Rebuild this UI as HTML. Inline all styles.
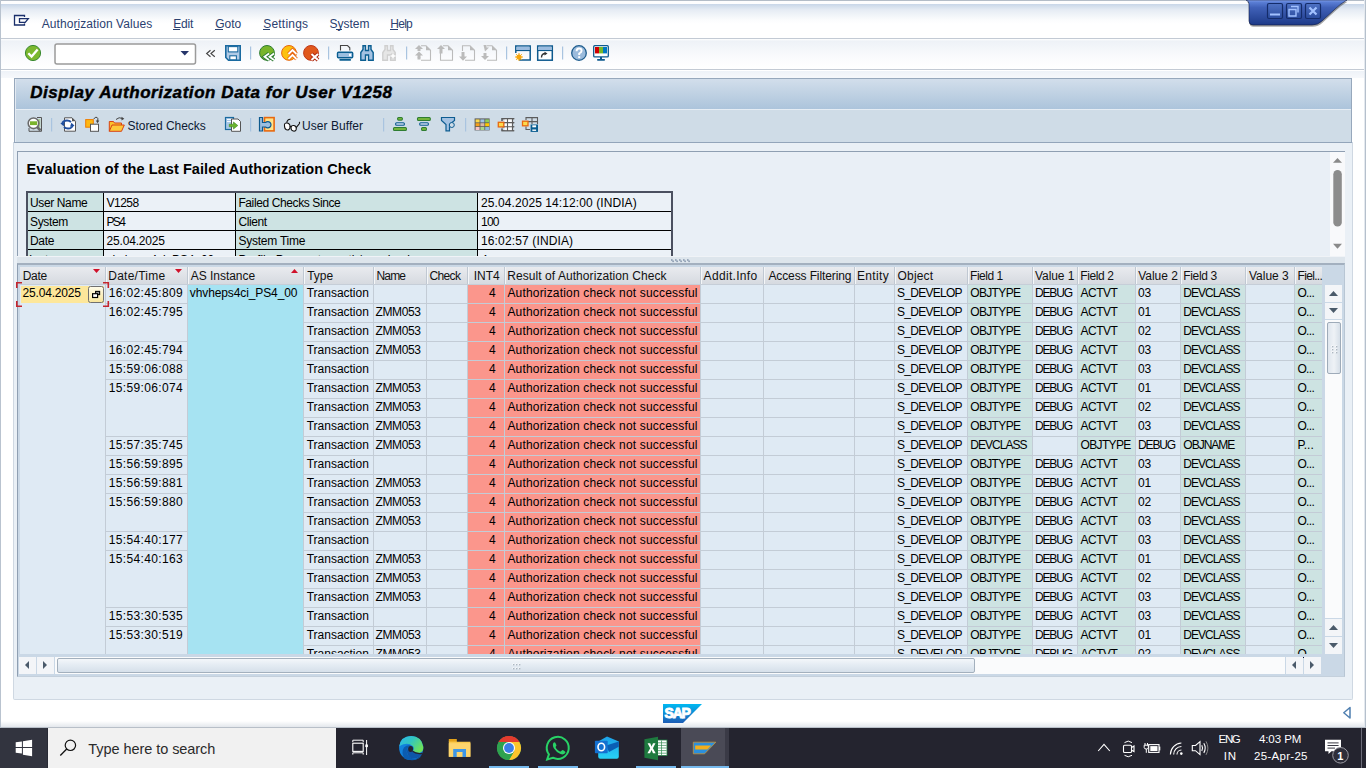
<!DOCTYPE html><html><head><meta charset="utf-8"><style>
*{margin:0;padding:0;box-sizing:border-box}
html,body{width:1366px;height:768px;overflow:hidden;background:#fff;font-family:"Liberation Sans", sans-serif;}
.a{position:absolute}
.t{position:absolute;white-space:pre;line-height:1;color:#000;font-size:12px}
svg{position:absolute;overflow:visible}
</style></head><body>
<div class="a" style="left:0px;top:0px;width:1366px;height:1px;background:#b3bcc7"></div>
<div class="a" style="left:0px;top:1px;width:1366px;height:3px;background:#fdfdfe"></div>
<div class="a" style="left:0px;top:4px;width:1366px;height:34px;background:linear-gradient(#c8d6e8 0px,#e6ecf4 6px,#fbfcfd 16px,#fff 20px)"></div>
<div class="a" style="left:0px;top:38px;width:1366px;height:1px;background:#c3cad4"></div>
<div class="a" style="left:0px;top:39px;width:1366px;height:30px;background:linear-gradient(#fff 0px,#eef2f7 2px,#fafbfd 18px,#fff 30px)"></div>
<div class="a" style="left:0px;top:69px;width:1366px;height:1px;background:#c3cad4"></div>
<div class="a" style="left:0px;top:70px;width:1366px;height:657px;background:#fff"></div>
<div class="a" style="left:1px;top:71px;width:1363px;height:7px;background:linear-gradient(#eef2f8,#f6f8fb)"></div>
<div class="a" style="left:0px;top:0px;width:1px;height:727px;background:#b9c3cf"></div>
<div class="a" style="left:1364px;top:0px;width:1px;height:727px;background:#e4e9ef"></div>
<div class="a" style="left:1365px;top:0px;width:1px;height:727px;background:#b5c0cc"></div>
<div class="a" style="left:1px;top:721px;width:1363px;height:6px;background:linear-gradient(rgba(255,255,255,0),#e3e7ec)"></div>
<div class="a" style="left:0px;top:727px;width:1366px;height:1px;background:#b8bfc8"></div>
<div class="t" style="left:41.70px;top:18px;font-size:12px;letter-spacing:0.075px;color:#2b4170;">Authorization Values</div>
<div class="t" style="left:173.30px;top:18px;font-size:12px;letter-spacing:-0.248px;color:#2b4170;">Edit</div>
<div class="t" style="left:215.20px;top:18px;font-size:12px;letter-spacing:-0.014px;color:#2b4170;">Goto</div>
<div class="t" style="left:263.20px;top:18px;font-size:12px;letter-spacing:0.220px;color:#2b4170;">Settings</div>
<div class="t" style="left:329.40px;top:18px;font-size:12px;color:#2b4170;">System</div>
<div class="t" style="left:390.30px;top:18px;font-size:12px;letter-spacing:-0.735px;color:#2b4170;">Help</div>
<div class="a" style="left:75.4px;top:29px;width:4.0px;height:1px;background:#2b4170"></div>
<div class="a" style="left:173.2px;top:29px;width:7.3px;height:1px;background:#2b4170"></div>
<div class="a" style="left:215.2px;top:29px;width:8.3px;height:1px;background:#2b4170"></div>
<div class="a" style="left:263.2px;top:29px;width:7.0px;height:1px;background:#2b4170"></div>
<div class="a" style="left:336.1px;top:29px;width:5.7px;height:1px;background:#2b4170"></div>
<div class="a" style="left:390.1px;top:29px;width:7.9px;height:1px;background:#2b4170"></div>
<div class="a" style="left:13px;top:142px;width:1340px;height:558px;background:#eaf0f6;border:1px solid #cfd8e2;border-top:none;border-radius:0 0 2px 2px"></div>
<div class="a" style="left:14px;top:78px;width:1338px;height:65px;background:#cfdce7;border:1px solid #97a8bc"></div>
<div class="a" style="left:15px;top:79px;width:1336px;height:30px;background:linear-gradient(#d2deeb,#acc4db);border-left:1px solid #e3eaf2"></div>
<div class="a" style="left:15px;top:109px;width:1336px;height:1px;background:#e6edf4"></div>
<div class="a" style="left:15px;top:110px;width:1336px;height:32px;background:#cfdce7;border-left:1px solid #e3eaf2"></div>
<div class="a" style="left:14px;top:142px;width:1338px;height:1px;background:#93a5ba"></div>
<div class="t" style="left:30.20px;top:84px;font-size:17px;font-weight:bold;font-style:italic;letter-spacing:0.559px;-webkit-text-stroke:0.45px #000;">Display Authorization Data for User V1258</div>
<div class="t" style="left:127.50px;top:120px;font-size:12px;letter-spacing:-0.034px;color:#0d1a33;">Stored Checks</div>
<div class="t" style="left:302.00px;top:120px;font-size:12px;letter-spacing:0.053px;color:#0d1a33;">User Buffer</div>
<div class="a" style="left:17px;top:151px;width:1328px;height:105px;background:#e9eff6;border-top:1px solid #8f9fb2;border-left:1px solid #8f9fb2"></div>
<div class="a" style="left:1330px;top:152px;width:15px;height:104px;background:#f8f9fb"></div>
<svg style="left:0;top:0" width="1366" height="768"><path d="M1333 162.8H1342L1337.5 158Z" fill="#8a8a8a"/><path d="M1333 243.8H1342L1337.5 248.8Z" fill="#8a8a8a"/><rect x="1333.3" y="170" width="8.5" height="56.5" rx="4.25" fill="#8c8c8c"/></svg>
<div class="t" style="left:26.60px;top:162px;font-size:14.5px;font-weight:bold;letter-spacing:0.072px;">Evaluation of the Last Failed Authorization Check</div>
<div class="a" style="left:26px;top:191px;width:647px;height:65px;background:#cde3e3;border:2px solid #4b5060;border-bottom:none"></div>
<div class="a" style="left:104px;top:193px;width:131px;height:63px;background:#ebf1f7"></div>
<div class="a" style="left:478px;top:193px;width:193px;height:63px;background:#ebf1f7"></div>
<div class="a" style="left:103px;top:193px;width:1px;height:63px;background:#000"></div>
<div class="a" style="left:235px;top:193px;width:1px;height:63px;background:#000"></div>
<div class="a" style="left:477px;top:193px;width:1px;height:63px;background:#000"></div>
<div class="a" style="left:28px;top:211px;width:643px;height:1px;background:#000"></div>
<div class="a" style="left:28px;top:230px;width:643px;height:1px;background:#000"></div>
<div class="a" style="left:28px;top:249px;width:643px;height:1px;background:#000"></div>
<div class="t" style="left:30.00px;top:197px;font-size:12px;letter-spacing:-0.376px;">User Name</div>
<div class="t" style="left:106.50px;top:197px;font-size:12px;letter-spacing:-0.506px;">V1258</div>
<div class="t" style="left:238.40px;top:197px;font-size:12px;letter-spacing:-0.389px;">Failed Checks Since</div>
<div class="t" style="left:481.00px;top:197px;font-size:12px;letter-spacing:0.087px;">25.04.2025 14:12:00 (INDIA)</div>
<div class="t" style="left:30.00px;top:216px;font-size:12px;letter-spacing:-0.362px;">System</div>
<div class="t" style="left:106.50px;top:216px;font-size:12px;letter-spacing:-1.654px;">PS4</div>
<div class="t" style="left:238.40px;top:216px;font-size:12px;letter-spacing:-0.389px;">Client</div>
<div class="t" style="left:481.00px;top:216px;font-size:12px;letter-spacing:-0.774px;">100</div>
<div class="t" style="left:30.00px;top:235px;font-size:12px;letter-spacing:-0.325px;">Date</div>
<div class="t" style="left:106.50px;top:235px;font-size:12px;letter-spacing:-0.176px;">25.04.2025</div>
<div class="t" style="left:238.40px;top:235px;font-size:12px;letter-spacing:-0.229px;">System Time</div>
<div class="t" style="left:481.00px;top:235px;font-size:12px;letter-spacing:0.137px;">16:02:57 (INDIA)</div>
<div class="t" style="left:29.00px;top:254px;font-size:12px;">Instance</div>
<div class="t" style="left:106.50px;top:254px;font-size:12px;letter-spacing:-0.109px;">vhvheps4ci_PS4_00</div>
<div class="t" style="left:238.40px;top:254px;font-size:12px;">Profile Parameter auth/no_check</div>
<div class="t" style="left:481.00px;top:254px;font-size:12px;">4</div>
<div class="a" style="left:17px;top:256px;width:1328px;height:7px;background:#dde5ec;border-top:1px solid #f0f3f7"></div>
<svg style="left:0;top:0" width="1366" height="768"><rect x="671" y="259.2" width="1.6" height="1.6" fill="#8a9bb0"/><rect x="672.3" y="260.5" width="1.6" height="1.6" fill="#8a9bb0"/><rect x="675" y="259.2" width="1.6" height="1.6" fill="#8a9bb0"/><rect x="676.3" y="260.5" width="1.6" height="1.6" fill="#8a9bb0"/><rect x="679" y="259.2" width="1.6" height="1.6" fill="#8a9bb0"/><rect x="680.3" y="260.5" width="1.6" height="1.6" fill="#8a9bb0"/><rect x="683" y="259.2" width="1.6" height="1.6" fill="#8a9bb0"/><rect x="684.3" y="260.5" width="1.6" height="1.6" fill="#8a9bb0"/><rect x="687" y="259.2" width="1.6" height="1.6" fill="#8a9bb0"/><rect x="688.3" y="260.5" width="1.6" height="1.6" fill="#8a9bb0"/></svg>
<div class="a" style="left:17px;top:263px;width:1328px;height:414px;background:#cad8e6;border-top:2px solid #a3b0bf;border-left:1px solid #8f9fb2;border-right:1px solid #b8c6d4;border-bottom:1px solid #c4d0dc"></div>
<div class="a" style="left:20px;top:267px;width:1302px;height:17px;background:linear-gradient(#e9ebef,#d6dae0)"></div>
<div class="a" style="left:20px;top:284px;width:1302px;height:1px;background:#c6ced8"></div>
<div class="a" style="left:105px;top:267px;width:1px;height:17px;background:#c0c8d2"></div>
<div class="a" style="left:106px;top:267px;width:1px;height:17px;background:#f4f6f8"></div>
<div class="a" style="left:187px;top:267px;width:1px;height:17px;background:#c0c8d2"></div>
<div class="a" style="left:188px;top:267px;width:1px;height:17px;background:#f4f6f8"></div>
<div class="a" style="left:303px;top:267px;width:1px;height:17px;background:#c0c8d2"></div>
<div class="a" style="left:304px;top:267px;width:1px;height:17px;background:#f4f6f8"></div>
<div class="a" style="left:373px;top:267px;width:1px;height:17px;background:#c0c8d2"></div>
<div class="a" style="left:374px;top:267px;width:1px;height:17px;background:#f4f6f8"></div>
<div class="a" style="left:426px;top:267px;width:1px;height:17px;background:#c0c8d2"></div>
<div class="a" style="left:427px;top:267px;width:1px;height:17px;background:#f4f6f8"></div>
<div class="a" style="left:467px;top:267px;width:1px;height:17px;background:#c0c8d2"></div>
<div class="a" style="left:468px;top:267px;width:1px;height:17px;background:#f4f6f8"></div>
<div class="a" style="left:504px;top:267px;width:1px;height:17px;background:#c0c8d2"></div>
<div class="a" style="left:505px;top:267px;width:1px;height:17px;background:#f4f6f8"></div>
<div class="a" style="left:700px;top:267px;width:1px;height:17px;background:#c0c8d2"></div>
<div class="a" style="left:701px;top:267px;width:1px;height:17px;background:#f4f6f8"></div>
<div class="a" style="left:763px;top:267px;width:1px;height:17px;background:#c0c8d2"></div>
<div class="a" style="left:764px;top:267px;width:1px;height:17px;background:#f4f6f8"></div>
<div class="a" style="left:854px;top:267px;width:1px;height:17px;background:#c0c8d2"></div>
<div class="a" style="left:855px;top:267px;width:1px;height:17px;background:#f4f6f8"></div>
<div class="a" style="left:894px;top:267px;width:1px;height:17px;background:#c0c8d2"></div>
<div class="a" style="left:895px;top:267px;width:1px;height:17px;background:#f4f6f8"></div>
<div class="a" style="left:967px;top:267px;width:1px;height:17px;background:#c0c8d2"></div>
<div class="a" style="left:968px;top:267px;width:1px;height:17px;background:#f4f6f8"></div>
<div class="a" style="left:1032px;top:267px;width:1px;height:17px;background:#c0c8d2"></div>
<div class="a" style="left:1033px;top:267px;width:1px;height:17px;background:#f4f6f8"></div>
<div class="a" style="left:1077px;top:267px;width:1px;height:17px;background:#c0c8d2"></div>
<div class="a" style="left:1078px;top:267px;width:1px;height:17px;background:#f4f6f8"></div>
<div class="a" style="left:1135px;top:267px;width:1px;height:17px;background:#c0c8d2"></div>
<div class="a" style="left:1136px;top:267px;width:1px;height:17px;background:#f4f6f8"></div>
<div class="a" style="left:1180px;top:267px;width:1px;height:17px;background:#c0c8d2"></div>
<div class="a" style="left:1181px;top:267px;width:1px;height:17px;background:#f4f6f8"></div>
<div class="a" style="left:1245px;top:267px;width:1px;height:17px;background:#c0c8d2"></div>
<div class="a" style="left:1246px;top:267px;width:1px;height:17px;background:#f4f6f8"></div>
<div class="a" style="left:1294px;top:267px;width:1px;height:17px;background:#c0c8d2"></div>
<div class="a" style="left:1295px;top:267px;width:1px;height:17px;background:#f4f6f8"></div>
<div class="t" style="left:22.70px;top:270px;font-size:12px;letter-spacing:-0.291px;color:#111;">Date</div>
<div class="t" style="left:108.30px;top:270px;font-size:12px;letter-spacing:0.234px;color:#111;">Date/Time</div>
<div class="t" style="left:190.70px;top:270px;font-size:12px;letter-spacing:-0.023px;color:#111;">AS Instance</div>
<div class="t" style="left:307.20px;top:270px;font-size:12px;letter-spacing:-0.014px;color:#111;">Type</div>
<div class="t" style="left:376.50px;top:270px;font-size:12px;letter-spacing:-0.845px;color:#111;">Name</div>
<div class="t" style="left:429.60px;top:270px;font-size:12px;letter-spacing:-0.678px;color:#111;">Check</div>
<div class="t" style="left:473.70px;top:270px;font-size:12px;letter-spacing:-0.010px;color:#111;">INT4</div>
<div class="t" style="left:507.20px;top:270px;font-size:12px;letter-spacing:0.069px;color:#111;">Result of Authorization Check</div>
<div class="t" style="left:703.60px;top:270px;font-size:12px;letter-spacing:0.319px;color:#111;">Addit.Info</div>
<div class="t" style="left:768.40px;top:270px;font-size:12px;letter-spacing:-0.108px;color:#111;">Access Filtering</div>
<div class="t" style="left:856.90px;top:270px;font-size:12px;letter-spacing:0.358px;color:#111;">Entity</div>
<div class="t" style="left:897.50px;top:270px;font-size:12px;letter-spacing:0.190px;color:#111;">Object</div>
<div class="t" style="left:970.10px;top:270px;font-size:12px;letter-spacing:-0.491px;color:#111;">Field 1</div>
<div class="t" style="left:1035.10px;top:270px;font-size:12px;letter-spacing:-0.089px;color:#111;">Value 1</div>
<div class="t" style="left:1080.20px;top:270px;font-size:12px;letter-spacing:-0.391px;color:#111;">Field 2</div>
<div class="t" style="left:1138.20px;top:270px;font-size:12px;letter-spacing:-0.022px;color:#111;">Value 2</div>
<div class="t" style="left:1183.30px;top:270px;font-size:12px;letter-spacing:-0.357px;color:#111;">Field 3</div>
<div class="t" style="left:1249.00px;top:270px;font-size:12px;letter-spacing:-0.022px;color:#111;">Value 3</div>
<div class="t" style="left:1297.50px;top:270px;font-size:12px;letter-spacing:-0.667px;color:#111;">Fiel...</div>
<svg style="left:93.0px;top:268.5px" width="7" height="4"><path d="M0 0 L7 0 L3.5 4Z" fill="#d0112b"/></svg>
<svg style="left:174.9px;top:268.5px" width="7" height="4"><path d="M0 0 L7 0 L3.5 4Z" fill="#d0112b"/></svg>
<svg style="left:290.7px;top:268.5px" width="7" height="4"><path d="M0 4 L3.5 0 L7 4Z" fill="#d0112b"/></svg>
<div class="a" style="left:20px;top:285px;width:85px;height:369px;background:#dfeaf4"></div>
<div class="a" style="left:105px;top:285px;width:1px;height:369px;background:#c3ccd6"></div>
<div class="a" style="left:106px;top:285px;width:81px;height:369px;background:#dfeaf4"></div>
<div class="a" style="left:187px;top:285px;width:1px;height:369px;background:#c3ccd6"></div>
<div class="a" style="left:188px;top:285px;width:115px;height:369px;background:#a6e3f2"></div>
<div class="a" style="left:303px;top:285px;width:1px;height:369px;background:#c3ccd6"></div>
<div class="a" style="left:304px;top:285px;width:69px;height:369px;background:#dfeaf4"></div>
<div class="a" style="left:373px;top:285px;width:1px;height:369px;background:#c3ccd6"></div>
<div class="a" style="left:374px;top:285px;width:52px;height:369px;background:#dfeaf4"></div>
<div class="a" style="left:426px;top:285px;width:1px;height:369px;background:#c3ccd6"></div>
<div class="a" style="left:427px;top:285px;width:40px;height:369px;background:#dfeaf4"></div>
<div class="a" style="left:467px;top:285px;width:1px;height:369px;background:#c3ccd6"></div>
<div class="a" style="left:468px;top:285px;width:36px;height:369px;background:#fb968c"></div>
<div class="a" style="left:504px;top:285px;width:1px;height:369px;background:#c3ccd6"></div>
<div class="a" style="left:505px;top:285px;width:195px;height:369px;background:#fb968c"></div>
<div class="a" style="left:700px;top:285px;width:1px;height:369px;background:#c3ccd6"></div>
<div class="a" style="left:701px;top:285px;width:62px;height:369px;background:#dfeaf4"></div>
<div class="a" style="left:763px;top:285px;width:1px;height:369px;background:#c3ccd6"></div>
<div class="a" style="left:764px;top:285px;width:90px;height:369px;background:#dfeaf4"></div>
<div class="a" style="left:854px;top:285px;width:1px;height:369px;background:#c3ccd6"></div>
<div class="a" style="left:855px;top:285px;width:39px;height:369px;background:#dfeaf4"></div>
<div class="a" style="left:894px;top:285px;width:1px;height:369px;background:#c3ccd6"></div>
<div class="a" style="left:895px;top:285px;width:72px;height:369px;background:#dfeaf4"></div>
<div class="a" style="left:967px;top:285px;width:1px;height:369px;background:#c3ccd6"></div>
<div class="a" style="left:968px;top:285px;width:64px;height:369px;background:#cde3e2"></div>
<div class="a" style="left:1032px;top:285px;width:1px;height:369px;background:#c3ccd6"></div>
<div class="a" style="left:1033px;top:285px;width:44px;height:369px;background:#dfeaf4"></div>
<div class="a" style="left:1077px;top:285px;width:1px;height:369px;background:#c3ccd6"></div>
<div class="a" style="left:1078px;top:285px;width:57px;height:369px;background:#cde3e2"></div>
<div class="a" style="left:1135px;top:285px;width:1px;height:369px;background:#c3ccd6"></div>
<div class="a" style="left:1136px;top:285px;width:44px;height:369px;background:#dfeaf4"></div>
<div class="a" style="left:1180px;top:285px;width:1px;height:369px;background:#c3ccd6"></div>
<div class="a" style="left:1181px;top:285px;width:64px;height:369px;background:#cde3e2"></div>
<div class="a" style="left:1245px;top:285px;width:1px;height:369px;background:#c3ccd6"></div>
<div class="a" style="left:1246px;top:285px;width:48px;height:369px;background:#dfeaf4"></div>
<div class="a" style="left:1294px;top:285px;width:1px;height:369px;background:#c3ccd6"></div>
<div class="a" style="left:1295px;top:285px;width:27px;height:369px;background:#cde3e2"></div>
<div class="a" style="left:304px;top:303px;width:1018px;height:1px;background:#c3ccd6"></div>
<div class="a" style="left:304px;top:322px;width:1018px;height:1px;background:#c3ccd6"></div>
<div class="a" style="left:304px;top:341px;width:1018px;height:1px;background:#c3ccd6"></div>
<div class="a" style="left:304px;top:360px;width:1018px;height:1px;background:#c3ccd6"></div>
<div class="a" style="left:304px;top:379px;width:1018px;height:1px;background:#c3ccd6"></div>
<div class="a" style="left:304px;top:398px;width:1018px;height:1px;background:#c3ccd6"></div>
<div class="a" style="left:304px;top:417px;width:1018px;height:1px;background:#c3ccd6"></div>
<div class="a" style="left:304px;top:436px;width:1018px;height:1px;background:#c3ccd6"></div>
<div class="a" style="left:304px;top:455px;width:1018px;height:1px;background:#c3ccd6"></div>
<div class="a" style="left:304px;top:474px;width:1018px;height:1px;background:#c3ccd6"></div>
<div class="a" style="left:304px;top:493px;width:1018px;height:1px;background:#c3ccd6"></div>
<div class="a" style="left:304px;top:512px;width:1018px;height:1px;background:#c3ccd6"></div>
<div class="a" style="left:304px;top:531px;width:1018px;height:1px;background:#c3ccd6"></div>
<div class="a" style="left:304px;top:550px;width:1018px;height:1px;background:#c3ccd6"></div>
<div class="a" style="left:304px;top:569px;width:1018px;height:1px;background:#c3ccd6"></div>
<div class="a" style="left:304px;top:588px;width:1018px;height:1px;background:#c3ccd6"></div>
<div class="a" style="left:304px;top:607px;width:1018px;height:1px;background:#c3ccd6"></div>
<div class="a" style="left:304px;top:626px;width:1018px;height:1px;background:#c3ccd6"></div>
<div class="a" style="left:304px;top:645px;width:1018px;height:1px;background:#c3ccd6"></div>
<div class="a" style="left:106px;top:303px;width:81px;height:1px;background:#c3ccd6"></div>
<div class="a" style="left:106px;top:341px;width:81px;height:1px;background:#c3ccd6"></div>
<div class="a" style="left:106px;top:360px;width:81px;height:1px;background:#c3ccd6"></div>
<div class="a" style="left:106px;top:379px;width:81px;height:1px;background:#c3ccd6"></div>
<div class="a" style="left:106px;top:436px;width:81px;height:1px;background:#c3ccd6"></div>
<div class="a" style="left:106px;top:455px;width:81px;height:1px;background:#c3ccd6"></div>
<div class="a" style="left:106px;top:474px;width:81px;height:1px;background:#c3ccd6"></div>
<div class="a" style="left:106px;top:493px;width:81px;height:1px;background:#c3ccd6"></div>
<div class="a" style="left:106px;top:531px;width:81px;height:1px;background:#c3ccd6"></div>
<div class="a" style="left:106px;top:550px;width:81px;height:1px;background:#c3ccd6"></div>
<div class="a" style="left:106px;top:607px;width:81px;height:1px;background:#c3ccd6"></div>
<div class="a" style="left:106px;top:626px;width:81px;height:1px;background:#c3ccd6"></div>
<div class="t" style="left:108.80px;top:287px;font-size:12px;letter-spacing:0.355px;">16:02:45:809</div>
<div class="t" style="left:189.80px;top:287px;font-size:12px;letter-spacing:-0.109px;">vhvheps4ci_PS4_00</div>
<div class="t" style="left:306.70px;top:287px;font-size:12px;letter-spacing:-0.008px;">Transaction</div>
<div class="t" style="left:507.40px;top:287px;font-size:12px;letter-spacing:0.181px;">Authorization check not successful</div>
<div class="t" style="left:897.00px;top:287px;font-size:12px;letter-spacing:-0.733px;">S_DEVELOP</div>
<div class="t" style="left:970.20px;top:287px;font-size:12px;letter-spacing:-0.646px;">OBJTYPE</div>
<div class="t" style="left:1035.00px;top:287px;font-size:12px;letter-spacing:-1.160px;">DEBUG</div>
<div class="t" style="left:1080.50px;top:287px;font-size:12px;letter-spacing:-0.501px;">ACTVT</div>
<div class="t" style="left:1138.10px;top:287px;font-size:12px;letter-spacing:-0.274px;">03</div>
<div class="t" style="left:1183.30px;top:287px;font-size:12px;letter-spacing:-0.960px;">DEVCLASS</div>
<div class="t" style="left:1297.40px;top:287px;font-size:12px;letter-spacing:-0.667px;">O...</div>
<div class="t" style="left:488.90px;top:287px;font-size:12px;">4</div>
<div class="t" style="left:108.80px;top:306px;font-size:12px;letter-spacing:0.355px;">16:02:45:795</div>
<div class="t" style="left:306.70px;top:306px;font-size:12px;letter-spacing:-0.008px;">Transaction</div>
<div class="t" style="left:375.60px;top:306px;font-size:12px;letter-spacing:-0.414px;">ZMM053</div>
<div class="t" style="left:507.40px;top:306px;font-size:12px;letter-spacing:0.181px;">Authorization check not successful</div>
<div class="t" style="left:897.00px;top:306px;font-size:12px;letter-spacing:-0.733px;">S_DEVELOP</div>
<div class="t" style="left:970.20px;top:306px;font-size:12px;letter-spacing:-0.646px;">OBJTYPE</div>
<div class="t" style="left:1035.00px;top:306px;font-size:12px;letter-spacing:-1.160px;">DEBUG</div>
<div class="t" style="left:1080.50px;top:306px;font-size:12px;letter-spacing:-0.501px;">ACTVT</div>
<div class="t" style="left:1138.10px;top:306px;font-size:12px;letter-spacing:-0.274px;">01</div>
<div class="t" style="left:1183.30px;top:306px;font-size:12px;letter-spacing:-0.960px;">DEVCLASS</div>
<div class="t" style="left:1297.40px;top:306px;font-size:12px;letter-spacing:-0.667px;">O...</div>
<div class="t" style="left:488.90px;top:306px;font-size:12px;">4</div>
<div class="t" style="left:306.70px;top:325px;font-size:12px;letter-spacing:-0.008px;">Transaction</div>
<div class="t" style="left:375.60px;top:325px;font-size:12px;letter-spacing:-0.414px;">ZMM053</div>
<div class="t" style="left:507.40px;top:325px;font-size:12px;letter-spacing:0.181px;">Authorization check not successful</div>
<div class="t" style="left:897.00px;top:325px;font-size:12px;letter-spacing:-0.733px;">S_DEVELOP</div>
<div class="t" style="left:970.20px;top:325px;font-size:12px;letter-spacing:-0.646px;">OBJTYPE</div>
<div class="t" style="left:1035.00px;top:325px;font-size:12px;letter-spacing:-1.160px;">DEBUG</div>
<div class="t" style="left:1080.50px;top:325px;font-size:12px;letter-spacing:-0.501px;">ACTVT</div>
<div class="t" style="left:1138.10px;top:325px;font-size:12px;letter-spacing:-0.274px;">02</div>
<div class="t" style="left:1183.30px;top:325px;font-size:12px;letter-spacing:-0.960px;">DEVCLASS</div>
<div class="t" style="left:1297.40px;top:325px;font-size:12px;letter-spacing:-0.667px;">O...</div>
<div class="t" style="left:488.90px;top:325px;font-size:12px;">4</div>
<div class="t" style="left:108.80px;top:344px;font-size:12px;letter-spacing:0.355px;">16:02:45:794</div>
<div class="t" style="left:306.70px;top:344px;font-size:12px;letter-spacing:-0.008px;">Transaction</div>
<div class="t" style="left:375.60px;top:344px;font-size:12px;letter-spacing:-0.414px;">ZMM053</div>
<div class="t" style="left:507.40px;top:344px;font-size:12px;letter-spacing:0.181px;">Authorization check not successful</div>
<div class="t" style="left:897.00px;top:344px;font-size:12px;letter-spacing:-0.733px;">S_DEVELOP</div>
<div class="t" style="left:970.20px;top:344px;font-size:12px;letter-spacing:-0.646px;">OBJTYPE</div>
<div class="t" style="left:1035.00px;top:344px;font-size:12px;letter-spacing:-1.160px;">DEBUG</div>
<div class="t" style="left:1080.50px;top:344px;font-size:12px;letter-spacing:-0.501px;">ACTVT</div>
<div class="t" style="left:1138.10px;top:344px;font-size:12px;letter-spacing:-0.274px;">03</div>
<div class="t" style="left:1183.30px;top:344px;font-size:12px;letter-spacing:-0.960px;">DEVCLASS</div>
<div class="t" style="left:1297.40px;top:344px;font-size:12px;letter-spacing:-0.667px;">O...</div>
<div class="t" style="left:488.90px;top:344px;font-size:12px;">4</div>
<div class="t" style="left:108.80px;top:363px;font-size:12px;letter-spacing:0.355px;">15:59:06:088</div>
<div class="t" style="left:306.70px;top:363px;font-size:12px;letter-spacing:-0.008px;">Transaction</div>
<div class="t" style="left:507.40px;top:363px;font-size:12px;letter-spacing:0.181px;">Authorization check not successful</div>
<div class="t" style="left:897.00px;top:363px;font-size:12px;letter-spacing:-0.733px;">S_DEVELOP</div>
<div class="t" style="left:970.20px;top:363px;font-size:12px;letter-spacing:-0.646px;">OBJTYPE</div>
<div class="t" style="left:1035.00px;top:363px;font-size:12px;letter-spacing:-1.160px;">DEBUG</div>
<div class="t" style="left:1080.50px;top:363px;font-size:12px;letter-spacing:-0.501px;">ACTVT</div>
<div class="t" style="left:1138.10px;top:363px;font-size:12px;letter-spacing:-0.274px;">03</div>
<div class="t" style="left:1183.30px;top:363px;font-size:12px;letter-spacing:-0.960px;">DEVCLASS</div>
<div class="t" style="left:1297.40px;top:363px;font-size:12px;letter-spacing:-0.667px;">O...</div>
<div class="t" style="left:488.90px;top:363px;font-size:12px;">4</div>
<div class="t" style="left:108.80px;top:382px;font-size:12px;letter-spacing:0.355px;">15:59:06:074</div>
<div class="t" style="left:306.70px;top:382px;font-size:12px;letter-spacing:-0.008px;">Transaction</div>
<div class="t" style="left:375.60px;top:382px;font-size:12px;letter-spacing:-0.414px;">ZMM053</div>
<div class="t" style="left:507.40px;top:382px;font-size:12px;letter-spacing:0.181px;">Authorization check not successful</div>
<div class="t" style="left:897.00px;top:382px;font-size:12px;letter-spacing:-0.733px;">S_DEVELOP</div>
<div class="t" style="left:970.20px;top:382px;font-size:12px;letter-spacing:-0.646px;">OBJTYPE</div>
<div class="t" style="left:1035.00px;top:382px;font-size:12px;letter-spacing:-1.160px;">DEBUG</div>
<div class="t" style="left:1080.50px;top:382px;font-size:12px;letter-spacing:-0.501px;">ACTVT</div>
<div class="t" style="left:1138.10px;top:382px;font-size:12px;letter-spacing:-0.274px;">01</div>
<div class="t" style="left:1183.30px;top:382px;font-size:12px;letter-spacing:-0.960px;">DEVCLASS</div>
<div class="t" style="left:1297.40px;top:382px;font-size:12px;letter-spacing:-0.667px;">O...</div>
<div class="t" style="left:488.90px;top:382px;font-size:12px;">4</div>
<div class="t" style="left:306.70px;top:401px;font-size:12px;letter-spacing:-0.008px;">Transaction</div>
<div class="t" style="left:375.60px;top:401px;font-size:12px;letter-spacing:-0.414px;">ZMM053</div>
<div class="t" style="left:507.40px;top:401px;font-size:12px;letter-spacing:0.181px;">Authorization check not successful</div>
<div class="t" style="left:897.00px;top:401px;font-size:12px;letter-spacing:-0.733px;">S_DEVELOP</div>
<div class="t" style="left:970.20px;top:401px;font-size:12px;letter-spacing:-0.646px;">OBJTYPE</div>
<div class="t" style="left:1035.00px;top:401px;font-size:12px;letter-spacing:-1.160px;">DEBUG</div>
<div class="t" style="left:1080.50px;top:401px;font-size:12px;letter-spacing:-0.501px;">ACTVT</div>
<div class="t" style="left:1138.10px;top:401px;font-size:12px;letter-spacing:-0.274px;">02</div>
<div class="t" style="left:1183.30px;top:401px;font-size:12px;letter-spacing:-0.960px;">DEVCLASS</div>
<div class="t" style="left:1297.40px;top:401px;font-size:12px;letter-spacing:-0.667px;">O...</div>
<div class="t" style="left:488.90px;top:401px;font-size:12px;">4</div>
<div class="t" style="left:306.70px;top:420px;font-size:12px;letter-spacing:-0.008px;">Transaction</div>
<div class="t" style="left:375.60px;top:420px;font-size:12px;letter-spacing:-0.414px;">ZMM053</div>
<div class="t" style="left:507.40px;top:420px;font-size:12px;letter-spacing:0.181px;">Authorization check not successful</div>
<div class="t" style="left:897.00px;top:420px;font-size:12px;letter-spacing:-0.733px;">S_DEVELOP</div>
<div class="t" style="left:970.20px;top:420px;font-size:12px;letter-spacing:-0.646px;">OBJTYPE</div>
<div class="t" style="left:1035.00px;top:420px;font-size:12px;letter-spacing:-1.160px;">DEBUG</div>
<div class="t" style="left:1080.50px;top:420px;font-size:12px;letter-spacing:-0.501px;">ACTVT</div>
<div class="t" style="left:1138.10px;top:420px;font-size:12px;letter-spacing:-0.274px;">03</div>
<div class="t" style="left:1183.30px;top:420px;font-size:12px;letter-spacing:-0.960px;">DEVCLASS</div>
<div class="t" style="left:1297.40px;top:420px;font-size:12px;letter-spacing:-0.667px;">O...</div>
<div class="t" style="left:488.90px;top:420px;font-size:12px;">4</div>
<div class="t" style="left:108.80px;top:439px;font-size:12px;letter-spacing:0.355px;">15:57:35:745</div>
<div class="t" style="left:306.70px;top:439px;font-size:12px;letter-spacing:-0.008px;">Transaction</div>
<div class="t" style="left:375.60px;top:439px;font-size:12px;letter-spacing:-0.414px;">ZMM053</div>
<div class="t" style="left:507.40px;top:439px;font-size:12px;letter-spacing:0.181px;">Authorization check not successful</div>
<div class="t" style="left:897.00px;top:439px;font-size:12px;letter-spacing:-0.733px;">S_DEVELOP</div>
<div class="t" style="left:970.20px;top:439px;font-size:12px;letter-spacing:-0.960px;">DEVCLASS</div>
<div class="t" style="left:1080.50px;top:439px;font-size:12px;letter-spacing:-0.646px;">OBJTYPE</div>
<div class="t" style="left:1138.10px;top:439px;font-size:12px;letter-spacing:-1.160px;">DEBUG</div>
<div class="t" style="left:1183.30px;top:439px;font-size:12px;letter-spacing:-1.001px;">OBJNAME</div>
<div class="t" style="left:1297.40px;top:439px;font-size:12px;letter-spacing:-0.042px;">P...</div>
<div class="t" style="left:488.90px;top:439px;font-size:12px;">4</div>
<div class="t" style="left:108.80px;top:458px;font-size:12px;letter-spacing:0.355px;">15:56:59:895</div>
<div class="t" style="left:306.70px;top:458px;font-size:12px;letter-spacing:-0.008px;">Transaction</div>
<div class="t" style="left:507.40px;top:458px;font-size:12px;letter-spacing:0.181px;">Authorization check not successful</div>
<div class="t" style="left:897.00px;top:458px;font-size:12px;letter-spacing:-0.733px;">S_DEVELOP</div>
<div class="t" style="left:970.20px;top:458px;font-size:12px;letter-spacing:-0.646px;">OBJTYPE</div>
<div class="t" style="left:1035.00px;top:458px;font-size:12px;letter-spacing:-1.160px;">DEBUG</div>
<div class="t" style="left:1080.50px;top:458px;font-size:12px;letter-spacing:-0.501px;">ACTVT</div>
<div class="t" style="left:1138.10px;top:458px;font-size:12px;letter-spacing:-0.274px;">03</div>
<div class="t" style="left:1183.30px;top:458px;font-size:12px;letter-spacing:-0.960px;">DEVCLASS</div>
<div class="t" style="left:1297.40px;top:458px;font-size:12px;letter-spacing:-0.667px;">O...</div>
<div class="t" style="left:488.90px;top:458px;font-size:12px;">4</div>
<div class="t" style="left:108.80px;top:477px;font-size:12px;letter-spacing:0.355px;">15:56:59:881</div>
<div class="t" style="left:306.70px;top:477px;font-size:12px;letter-spacing:-0.008px;">Transaction</div>
<div class="t" style="left:375.60px;top:477px;font-size:12px;letter-spacing:-0.414px;">ZMM053</div>
<div class="t" style="left:507.40px;top:477px;font-size:12px;letter-spacing:0.181px;">Authorization check not successful</div>
<div class="t" style="left:897.00px;top:477px;font-size:12px;letter-spacing:-0.733px;">S_DEVELOP</div>
<div class="t" style="left:970.20px;top:477px;font-size:12px;letter-spacing:-0.646px;">OBJTYPE</div>
<div class="t" style="left:1035.00px;top:477px;font-size:12px;letter-spacing:-1.160px;">DEBUG</div>
<div class="t" style="left:1080.50px;top:477px;font-size:12px;letter-spacing:-0.501px;">ACTVT</div>
<div class="t" style="left:1138.10px;top:477px;font-size:12px;letter-spacing:-0.274px;">01</div>
<div class="t" style="left:1183.30px;top:477px;font-size:12px;letter-spacing:-0.960px;">DEVCLASS</div>
<div class="t" style="left:1297.40px;top:477px;font-size:12px;letter-spacing:-0.667px;">O...</div>
<div class="t" style="left:488.90px;top:477px;font-size:12px;">4</div>
<div class="t" style="left:108.80px;top:496px;font-size:12px;letter-spacing:0.355px;">15:56:59:880</div>
<div class="t" style="left:306.70px;top:496px;font-size:12px;letter-spacing:-0.008px;">Transaction</div>
<div class="t" style="left:375.60px;top:496px;font-size:12px;letter-spacing:-0.414px;">ZMM053</div>
<div class="t" style="left:507.40px;top:496px;font-size:12px;letter-spacing:0.181px;">Authorization check not successful</div>
<div class="t" style="left:897.00px;top:496px;font-size:12px;letter-spacing:-0.733px;">S_DEVELOP</div>
<div class="t" style="left:970.20px;top:496px;font-size:12px;letter-spacing:-0.646px;">OBJTYPE</div>
<div class="t" style="left:1035.00px;top:496px;font-size:12px;letter-spacing:-1.160px;">DEBUG</div>
<div class="t" style="left:1080.50px;top:496px;font-size:12px;letter-spacing:-0.501px;">ACTVT</div>
<div class="t" style="left:1138.10px;top:496px;font-size:12px;letter-spacing:-0.274px;">02</div>
<div class="t" style="left:1183.30px;top:496px;font-size:12px;letter-spacing:-0.960px;">DEVCLASS</div>
<div class="t" style="left:1297.40px;top:496px;font-size:12px;letter-spacing:-0.667px;">O...</div>
<div class="t" style="left:488.90px;top:496px;font-size:12px;">4</div>
<div class="t" style="left:306.70px;top:515px;font-size:12px;letter-spacing:-0.008px;">Transaction</div>
<div class="t" style="left:375.60px;top:515px;font-size:12px;letter-spacing:-0.414px;">ZMM053</div>
<div class="t" style="left:507.40px;top:515px;font-size:12px;letter-spacing:0.181px;">Authorization check not successful</div>
<div class="t" style="left:897.00px;top:515px;font-size:12px;letter-spacing:-0.733px;">S_DEVELOP</div>
<div class="t" style="left:970.20px;top:515px;font-size:12px;letter-spacing:-0.646px;">OBJTYPE</div>
<div class="t" style="left:1035.00px;top:515px;font-size:12px;letter-spacing:-1.160px;">DEBUG</div>
<div class="t" style="left:1080.50px;top:515px;font-size:12px;letter-spacing:-0.501px;">ACTVT</div>
<div class="t" style="left:1138.10px;top:515px;font-size:12px;letter-spacing:-0.274px;">03</div>
<div class="t" style="left:1183.30px;top:515px;font-size:12px;letter-spacing:-0.960px;">DEVCLASS</div>
<div class="t" style="left:1297.40px;top:515px;font-size:12px;letter-spacing:-0.667px;">O...</div>
<div class="t" style="left:488.90px;top:515px;font-size:12px;">4</div>
<div class="t" style="left:108.80px;top:534px;font-size:12px;letter-spacing:0.355px;">15:54:40:177</div>
<div class="t" style="left:306.70px;top:534px;font-size:12px;letter-spacing:-0.008px;">Transaction</div>
<div class="t" style="left:507.40px;top:534px;font-size:12px;letter-spacing:0.181px;">Authorization check not successful</div>
<div class="t" style="left:897.00px;top:534px;font-size:12px;letter-spacing:-0.733px;">S_DEVELOP</div>
<div class="t" style="left:970.20px;top:534px;font-size:12px;letter-spacing:-0.646px;">OBJTYPE</div>
<div class="t" style="left:1035.00px;top:534px;font-size:12px;letter-spacing:-1.160px;">DEBUG</div>
<div class="t" style="left:1080.50px;top:534px;font-size:12px;letter-spacing:-0.501px;">ACTVT</div>
<div class="t" style="left:1138.10px;top:534px;font-size:12px;letter-spacing:-0.274px;">03</div>
<div class="t" style="left:1183.30px;top:534px;font-size:12px;letter-spacing:-0.960px;">DEVCLASS</div>
<div class="t" style="left:1297.40px;top:534px;font-size:12px;letter-spacing:-0.667px;">O...</div>
<div class="t" style="left:488.90px;top:534px;font-size:12px;">4</div>
<div class="t" style="left:108.80px;top:553px;font-size:12px;letter-spacing:0.355px;">15:54:40:163</div>
<div class="t" style="left:306.70px;top:553px;font-size:12px;letter-spacing:-0.008px;">Transaction</div>
<div class="t" style="left:375.60px;top:553px;font-size:12px;letter-spacing:-0.414px;">ZMM053</div>
<div class="t" style="left:507.40px;top:553px;font-size:12px;letter-spacing:0.181px;">Authorization check not successful</div>
<div class="t" style="left:897.00px;top:553px;font-size:12px;letter-spacing:-0.733px;">S_DEVELOP</div>
<div class="t" style="left:970.20px;top:553px;font-size:12px;letter-spacing:-0.646px;">OBJTYPE</div>
<div class="t" style="left:1035.00px;top:553px;font-size:12px;letter-spacing:-1.160px;">DEBUG</div>
<div class="t" style="left:1080.50px;top:553px;font-size:12px;letter-spacing:-0.501px;">ACTVT</div>
<div class="t" style="left:1138.10px;top:553px;font-size:12px;letter-spacing:-0.274px;">01</div>
<div class="t" style="left:1183.30px;top:553px;font-size:12px;letter-spacing:-0.960px;">DEVCLASS</div>
<div class="t" style="left:1297.40px;top:553px;font-size:12px;letter-spacing:-0.667px;">O...</div>
<div class="t" style="left:488.90px;top:553px;font-size:12px;">4</div>
<div class="t" style="left:306.70px;top:572px;font-size:12px;letter-spacing:-0.008px;">Transaction</div>
<div class="t" style="left:375.60px;top:572px;font-size:12px;letter-spacing:-0.414px;">ZMM053</div>
<div class="t" style="left:507.40px;top:572px;font-size:12px;letter-spacing:0.181px;">Authorization check not successful</div>
<div class="t" style="left:897.00px;top:572px;font-size:12px;letter-spacing:-0.733px;">S_DEVELOP</div>
<div class="t" style="left:970.20px;top:572px;font-size:12px;letter-spacing:-0.646px;">OBJTYPE</div>
<div class="t" style="left:1035.00px;top:572px;font-size:12px;letter-spacing:-1.160px;">DEBUG</div>
<div class="t" style="left:1080.50px;top:572px;font-size:12px;letter-spacing:-0.501px;">ACTVT</div>
<div class="t" style="left:1138.10px;top:572px;font-size:12px;letter-spacing:-0.274px;">02</div>
<div class="t" style="left:1183.30px;top:572px;font-size:12px;letter-spacing:-0.960px;">DEVCLASS</div>
<div class="t" style="left:1297.40px;top:572px;font-size:12px;letter-spacing:-0.667px;">O...</div>
<div class="t" style="left:488.90px;top:572px;font-size:12px;">4</div>
<div class="t" style="left:306.70px;top:591px;font-size:12px;letter-spacing:-0.008px;">Transaction</div>
<div class="t" style="left:375.60px;top:591px;font-size:12px;letter-spacing:-0.414px;">ZMM053</div>
<div class="t" style="left:507.40px;top:591px;font-size:12px;letter-spacing:0.181px;">Authorization check not successful</div>
<div class="t" style="left:897.00px;top:591px;font-size:12px;letter-spacing:-0.733px;">S_DEVELOP</div>
<div class="t" style="left:970.20px;top:591px;font-size:12px;letter-spacing:-0.646px;">OBJTYPE</div>
<div class="t" style="left:1035.00px;top:591px;font-size:12px;letter-spacing:-1.160px;">DEBUG</div>
<div class="t" style="left:1080.50px;top:591px;font-size:12px;letter-spacing:-0.501px;">ACTVT</div>
<div class="t" style="left:1138.10px;top:591px;font-size:12px;letter-spacing:-0.274px;">03</div>
<div class="t" style="left:1183.30px;top:591px;font-size:12px;letter-spacing:-0.960px;">DEVCLASS</div>
<div class="t" style="left:1297.40px;top:591px;font-size:12px;letter-spacing:-0.667px;">O...</div>
<div class="t" style="left:488.90px;top:591px;font-size:12px;">4</div>
<div class="t" style="left:108.80px;top:610px;font-size:12px;letter-spacing:0.355px;">15:53:30:535</div>
<div class="t" style="left:306.70px;top:610px;font-size:12px;letter-spacing:-0.008px;">Transaction</div>
<div class="t" style="left:507.40px;top:610px;font-size:12px;letter-spacing:0.181px;">Authorization check not successful</div>
<div class="t" style="left:897.00px;top:610px;font-size:12px;letter-spacing:-0.733px;">S_DEVELOP</div>
<div class="t" style="left:970.20px;top:610px;font-size:12px;letter-spacing:-0.646px;">OBJTYPE</div>
<div class="t" style="left:1035.00px;top:610px;font-size:12px;letter-spacing:-1.160px;">DEBUG</div>
<div class="t" style="left:1080.50px;top:610px;font-size:12px;letter-spacing:-0.501px;">ACTVT</div>
<div class="t" style="left:1138.10px;top:610px;font-size:12px;letter-spacing:-0.274px;">03</div>
<div class="t" style="left:1183.30px;top:610px;font-size:12px;letter-spacing:-0.960px;">DEVCLASS</div>
<div class="t" style="left:1297.40px;top:610px;font-size:12px;letter-spacing:-0.667px;">O...</div>
<div class="t" style="left:488.90px;top:610px;font-size:12px;">4</div>
<div class="t" style="left:108.80px;top:629px;font-size:12px;letter-spacing:0.355px;">15:53:30:519</div>
<div class="t" style="left:306.70px;top:629px;font-size:12px;letter-spacing:-0.008px;">Transaction</div>
<div class="t" style="left:375.60px;top:629px;font-size:12px;letter-spacing:-0.414px;">ZMM053</div>
<div class="t" style="left:507.40px;top:629px;font-size:12px;letter-spacing:0.181px;">Authorization check not successful</div>
<div class="t" style="left:897.00px;top:629px;font-size:12px;letter-spacing:-0.733px;">S_DEVELOP</div>
<div class="t" style="left:970.20px;top:629px;font-size:12px;letter-spacing:-0.646px;">OBJTYPE</div>
<div class="t" style="left:1035.00px;top:629px;font-size:12px;letter-spacing:-1.160px;">DEBUG</div>
<div class="t" style="left:1080.50px;top:629px;font-size:12px;letter-spacing:-0.501px;">ACTVT</div>
<div class="t" style="left:1138.10px;top:629px;font-size:12px;letter-spacing:-0.274px;">01</div>
<div class="t" style="left:1183.30px;top:629px;font-size:12px;letter-spacing:-0.960px;">DEVCLASS</div>
<div class="t" style="left:1297.40px;top:629px;font-size:12px;letter-spacing:-0.667px;">O...</div>
<div class="t" style="left:488.90px;top:629px;font-size:12px;">4</div>
<div class="t" style="left:306.70px;top:648px;font-size:12px;letter-spacing:-0.008px;">Transaction</div>
<div class="t" style="left:375.60px;top:648px;font-size:12px;letter-spacing:-0.414px;">ZMM053</div>
<div class="t" style="left:507.40px;top:648px;font-size:12px;letter-spacing:0.181px;">Authorization check not successful</div>
<div class="t" style="left:897.00px;top:648px;font-size:12px;letter-spacing:-0.733px;">S_DEVELOP</div>
<div class="t" style="left:970.20px;top:648px;font-size:12px;letter-spacing:-0.646px;">OBJTYPE</div>
<div class="t" style="left:1035.00px;top:648px;font-size:12px;letter-spacing:-1.160px;">DEBUG</div>
<div class="t" style="left:1080.50px;top:648px;font-size:12px;letter-spacing:-0.501px;">ACTVT</div>
<div class="t" style="left:1138.10px;top:648px;font-size:12px;letter-spacing:-0.274px;">02</div>
<div class="t" style="left:1183.30px;top:648px;font-size:12px;letter-spacing:-0.960px;">DEVCLASS</div>
<div class="t" style="left:1297.40px;top:648px;font-size:12px;letter-spacing:-0.667px;">O...</div>
<div class="t" style="left:488.90px;top:648px;font-size:12px;">4</div>
<div class="a" style="left:21px;top:286px;width:83px;height:17px;background:#fde79a"></div>
<div class="t" style="left:22.50px;top:287px;font-size:12px;letter-spacing:-0.176px;">25.04.2025</div>
<div class="a" style="left:88px;top:286px;width:16px;height:17px;background:linear-gradient(#fffce8,#f8e59c);border:1px solid #707070;border-radius:2.5px"></div>
<svg style="left:0;top:0" width="1366" height="768"><rect x="95.6" y="291.4" width="4" height="3.2" fill="#999" stroke="#000" stroke-width="1.1"/><rect x="92.6" y="293.7" width="5" height="3.8" fill="#fff" stroke="#000" stroke-width="1.2"/><path d="M22 282.8H16.8V288M103 282.8H108.3V288M22 306.2H16.8V301M103 306.2H108.3V301" fill="none" stroke="#c4262e" stroke-width="1.6"/></svg>
<div class="a" style="left:18px;top:654px;width:1304px;height:3px;background:#cad8e6"></div>
<div class="a" style="left:19px;top:657px;width:17px;height:17px;background:#f3f5f8"></div>
<div class="a" style="left:37px;top:657px;width:17px;height:17px;background:#f3f5f8"></div>
<div class="a" style="left:55px;top:657px;width:1230px;height:17px;background:#fafbfc"></div>
<div class="a" style="left:57px;top:658px;width:918px;height:15px;background:linear-gradient(#f4f7fa,#e6edf4 40%,#d6e0ea);border:1px solid #a3b0bd;border-radius:2px"></div>
<div class="a" style="left:1286px;top:657px;width:17px;height:17px;background:#f3f5f8"></div>
<div class="a" style="left:1304px;top:657px;width:17px;height:17px;background:#f3f5f8"></div>
<svg style="left:25px;top:661px" width="5" height="9"><path d="M4 0 L4 8 L0 4Z" fill="#4a5a6a"/></svg>
<svg style="left:43px;top:661px" width="5" height="9"><path d="M0 0 L0 8 L4 4Z" fill="#4a5a6a"/></svg>
<svg style="left:1292px;top:661px" width="5" height="9"><path d="M4 0 L4 8 L0 4Z" fill="#4a5a6a"/></svg>
<svg style="left:1310px;top:661px" width="5" height="9"><path d="M0 0 L0 8 L4 4Z" fill="#4a5a6a"/></svg>
<div class="a" style="left:1325px;top:285px;width:17px;height:17px;background:#f3f5f8"></div>
<div class="a" style="left:1325px;top:303px;width:17px;height:16px;background:#f3f5f8"></div>
<div class="a" style="left:1325px;top:320px;width:17px;height:298px;background:#fafbfc"></div>
<div class="a" style="left:1327px;top:322px;width:14px;height:52px;background:linear-gradient(90deg,#dfe6ee,#eef2f6 50%,#d6dfe8);border:1px solid #9eabb9;border-radius:2px"></div>
<svg style="left:0;top:0" width="1366" height="768"><rect x="1331.5" y="345.5" width="1.5" height="1.5" fill="#fff"/><rect x="1332.1" y="346.1" width="1.2" height="1.2" fill="#9aa6b3"/><rect x="1331.5" y="348.5" width="1.5" height="1.5" fill="#fff"/><rect x="1332.1" y="349.1" width="1.2" height="1.2" fill="#9aa6b3"/><rect x="1331.5" y="351.5" width="1.5" height="1.5" fill="#fff"/><rect x="1332.1" y="352.1" width="1.2" height="1.2" fill="#9aa6b3"/><rect x="1335.5" y="345.5" width="1.5" height="1.5" fill="#fff"/><rect x="1336.1" y="346.1" width="1.2" height="1.2" fill="#9aa6b3"/><rect x="1335.5" y="348.5" width="1.5" height="1.5" fill="#fff"/><rect x="1336.1" y="349.1" width="1.2" height="1.2" fill="#9aa6b3"/><rect x="1335.5" y="351.5" width="1.5" height="1.5" fill="#fff"/><rect x="1336.1" y="352.1" width="1.2" height="1.2" fill="#9aa6b3"/><rect x="512.5" y="663.5" width="1.5" height="1.5" fill="#fff"/><rect x="513.1" y="664.1" width="1.2" height="1.2" fill="#9aa6b3"/><rect x="512.5" y="667.5" width="1.5" height="1.5" fill="#fff"/><rect x="513.1" y="668.1" width="1.2" height="1.2" fill="#9aa6b3"/><rect x="515.5" y="663.5" width="1.5" height="1.5" fill="#fff"/><rect x="516.1" y="664.1" width="1.2" height="1.2" fill="#9aa6b3"/><rect x="515.5" y="667.5" width="1.5" height="1.5" fill="#fff"/><rect x="516.1" y="668.1" width="1.2" height="1.2" fill="#9aa6b3"/><rect x="518.5" y="663.5" width="1.5" height="1.5" fill="#fff"/><rect x="519.1" y="664.1" width="1.2" height="1.2" fill="#9aa6b3"/><rect x="518.5" y="667.5" width="1.5" height="1.5" fill="#fff"/><rect x="519.1" y="668.1" width="1.2" height="1.2" fill="#9aa6b3"/></svg>
<div class="a" style="left:1325px;top:619px;width:17px;height:17px;background:#f3f5f8"></div>
<div class="a" style="left:1325px;top:637px;width:17px;height:17px;background:#f3f5f8"></div>
<svg style="left:1329px;top:291px" width="9" height="5"><path d="M0 5 L9 5 L4.5 0Z" fill="#4a5a6a"/></svg>
<svg style="left:1329px;top:308px" width="9" height="5"><path d="M0 0 L9 0 L4.5 5Z" fill="#4a5a6a"/></svg>
<svg style="left:1329px;top:625px" width="9" height="5"><path d="M0 5 L9 5 L4.5 0Z" fill="#4a5a6a"/></svg>
<svg style="left:1329px;top:643px" width="9" height="5"><path d="M0 0 L9 0 L4.5 5Z" fill="#4a5a6a"/></svg>
<svg style="left:0;top:0" width="1366" height="768"><path d="M24.5 17V15.5H14.5V25H24.5V23.5" fill="none" stroke="#1a2f6b" stroke-width="1.3"/><path d="M19.5 18.6H28.3L25.2 22.4H19.5Z" fill="none" stroke="#1a2f6b" stroke-width="1.3"/><defs><linearGradient id="wtab" x1="0" y1="0" x2="0" y2="1"><stop offset="0" stop-color="#8aa9f0"/><stop offset="0.08" stop-color="#5b7fd6"/><stop offset="0.3" stop-color="#4061b8"/><stop offset="1" stop-color="#1d3a88"/></linearGradient><linearGradient id="wbtn" x1="0" y1="0" x2="0" y2="1"><stop offset="0" stop-color="#4f72c4"/><stop offset="1" stop-color="#2b4c9e"/></linearGradient><linearGradient id="sapg" x1="0" y1="0" x2="0" y2="1"><stop offset="0" stop-color="#00b9f2"/><stop offset="1" stop-color="#1c5cb5"/></linearGradient></defs><path d="M1246 0H1347Q1340 4 1334 10L1322 21Q1318 25 1312 25H1253Q1249 25 1249 21V4Q1249 1 1246 0Z" fill="#000" opacity="0.35" transform="translate(0.5,1.8)"/><path d="M1246 0H1347Q1340 4 1334 10L1322 21Q1318 25 1312 25H1253Q1249 25 1249 21V4Q1249 1 1246 0Z" fill="url(#wtab)" stroke="#0d1a40" stroke-width="0.6"/><rect x="1267.5" y="3.5" width="15" height="15" rx="1.5" fill="url(#wbtn)" stroke="#142c6a" stroke-width="1.2"/><rect x="1286.5" y="3.5" width="15" height="15" rx="1.5" fill="url(#wbtn)" stroke="#142c6a" stroke-width="1.2"/><rect x="1305.5" y="3.5" width="15" height="15" rx="1.5" fill="url(#wbtn)" stroke="#142c6a" stroke-width="1.2"/><rect x="1270" y="13.5" width="10" height="2" fill="#a3c2ff"/><path d="M1291 6.5H1298V12.5M1289 9.5H1296V16H1289Z" fill="none" stroke="#a3c2ff" stroke-width="1.4"/><path d="M1309.5 7.5L1316.5 14.5M1316.5 7.5L1309.5 14.5" stroke="#a3c2ff" stroke-width="2.2"/><circle cx="33" cy="53" r="7.6" fill="#7cb82f" stroke="#3a8a30" stroke-width="1"/><path d="M28.3 53.2L31.6 56.6L37.6 49.6" fill="none" stroke="#fff" stroke-width="2.3"/><rect x="55" y="44" width="140.5" height="20" rx="2" fill="#fff" stroke="#9b9b9b" stroke-width="1.5"/><path d="M180.5 51H189L184.75 55.5Z" fill="#26356a"/><path d="M210.5 50.3L206.7 53.6L210.5 56.8M214.8 50.3L211 53.6L214.8 56.8" fill="none" stroke="#444" stroke-width="1.2"/><path d="M225.8 45.8H240.2V60.2H228.5L225.8 57.5Z" fill="#b2cbe6" stroke="#1a6aa0" stroke-width="1.6"/><rect x="228.3" y="46.6" width="9.5" height="5.3" fill="#fff" stroke="#1a6aa0" stroke-width="1.1"/><rect x="229.8" y="55.8" width="6.6" height="4" fill="#fff" stroke="#1a6aa0" stroke-width="1.1"/><rect x="250" y="46.5" width="1.2" height="13" fill="#a9c4e0"/><rect x="328" y="46.5" width="1.2" height="13" fill="#a9c4e0"/><rect x="406" y="46.5" width="1.2" height="13" fill="#a9c4e0"/><rect x="506" y="46.5" width="1.2" height="13" fill="#a9c4e0"/><rect x="562" y="46.5" width="1.2" height="13" fill="#a9c4e0"/><circle cx="267" cy="52.9" r="7.4" fill="#78b52a" stroke="#2e7d32" stroke-width="1"/><path d="M269 53.5L264.5 56.7L269 60M274 53.5L269.5 56.7L274 60" fill="none" stroke="#2e7d32" stroke-width="3.6"/><path d="M269 53.5L264.5 56.7L269 60M274 53.5L269.5 56.7L274 60" fill="none" stroke="#fff" stroke-width="1.8"/><circle cx="289" cy="52.9" r="7.4" fill="#fcc10e" stroke="#e8650f" stroke-width="1"/><path d="M288.5 54L292.5 50L296.5 54M288.5 59L292.5 55L296.5 59" fill="none" stroke="#e8650f" stroke-width="3.6"/><path d="M288.5 54L292.5 50L296.5 54M288.5 59L292.5 55L296.5 59" fill="none" stroke="#fff" stroke-width="1.8"/><circle cx="311" cy="52.9" r="7.4" fill="#e0581c" stroke="#c0391a" stroke-width="1"/><path d="M311.5 54L318 60M318 54L311.5 60" fill="none" stroke="#b02a10" stroke-width="3.8"/><path d="M311.5 54L318 60M318 54L311.5 60" fill="none" stroke="#fff" stroke-width="2"/><path d="M340.5 50.5V45.5H347.5L349.8 47.8V50.5" fill="none" stroke="#444" stroke-width="1.1"/><rect x="337.5" y="52.2" width="15.2" height="5.6" rx="1" fill="#9bbfe0" stroke="#0a5e91" stroke-width="1.4"/><rect x="349" y="53.8" width="2" height="2.4" fill="#fff"/><rect x="339.3" y="59" width="11.8" height="1.8" rx="0.8" fill="#0a5e91"/><path d="M363 45.8H365.5V50.5H368.5V45.8H371V49.5L373.2 52.5V60.2H368.5V55H365.5V60.2H360.8V52.5L363 49.5Z" fill="#a4c2e2" stroke="#0a5e91" stroke-width="1.4"/><path d="M385 45.8H387.5V50.5H390.5V45.8H393V49.5L395.2 52.5V60.2H390.5V55H387.5V60.2H382.8V52.5L385 49.5Z" fill="#e6e6e6" stroke="#cfcfcf" stroke-width="1.4"/><path d="M393 53V59M390 56H396" stroke="#cfcfcf" stroke-width="3.2"/><path d="M393 53.5V58.5M390.5 56H395.5" stroke="#fff" stroke-width="1.5"/><path d="M421 45.8H426L430.5 50.3V60.2H421" fill="none" stroke="#bbbbbb" stroke-width="1.1"/><path d="M426 45.8V50.3H430.5Z" fill="#bbbbbb"/><path d="M419 45L423 49H420.5V51H417.5V49H415Z" fill="#bbbbbb"/><path d="M419 51.5L423 55.5H420.5V57.5H417.5V55.5H415Z" fill="#bbbbbb"/><rect x="417.5" y="57" width="3" height="2.5" fill="#bbbbbb"/><path d="M443 45.8H448L452.5 50.3V60.2H443" fill="none" stroke="#bbbbbb" stroke-width="1.1"/><path d="M448 45.8V50.3H452.5Z" fill="#bbbbbb"/><path d="M441 45L445 49H442.5V53.5H439.5V49H437Z" fill="#bbbbbb"/><path d="M440.5 53V60.2H443" fill="none" stroke="#bbbbbb" stroke-width="1.1"/><path d="M465 45.8H470L474.5 50.3V60.2H465" fill="none" stroke="#bbbbbb" stroke-width="1.1"/><path d="M470 45.8V50.3H474.5Z" fill="#bbbbbb"/><path d="M461.5 52H464.5V56.5H467L463 60.8L459 56.5H461.5Z" fill="#bbbbbb"/><path d="M462.5 51V45.8H465" fill="none" stroke="#bbbbbb" stroke-width="1.1"/><path d="M487 45.8H492L496.5 50.3V60.2H487" fill="none" stroke="#bbbbbb" stroke-width="1.1"/><path d="M492 45.8V50.3H496.5Z" fill="#bbbbbb"/><path d="M483.5 45H486.5V47.5H489L485 51.5L48147.5H483.5Z" fill="#bbbbbb"/><path d="M483.5 53H486.5V56H489L485 60L481 56H483.5Z" fill="#bbbbbb"/><path d="M515.8 53V46H530.2V60H519" fill="none" stroke="#0e5a8e" stroke-width="1.5"/><rect x="516.5" y="46.7" width="13" height="3.3" fill="#9bbce0"/><rect x="515.8" y="50" width="14.4" height="1.1" fill="#0e5a8e"/><circle cx="519" cy="57" r="2.6" fill="#f7a70c"/><path d="M519 53V61M515 57H523M516.2 54.2L521.8 59.8M521.8 54.2L516.2 59.8" stroke="#f7a70c" stroke-width="1"/><rect x="537.7" y="46" width="14.6" height="14.2" fill="#fff" stroke="#0e5a8e" stroke-width="1.5"/><rect x="538.5" y="46.7" width="13" height="3.3" fill="#9bbce0"/><rect x="537.7" y="50" width="14.6" height="1.1" fill="#0e5a8e"/><path d="M541.5 57.5Q541.5 53.5 545.5 53.5" fill="none" stroke="#333" stroke-width="1.4"/><path d="M544.5 51.8L547.5 53.5L544.5 55.5Z" fill="#333"/><circle cx="579" cy="53" r="7.3" fill="#9bbbdc" stroke="#1f5d8e" stroke-width="1.3"/><path d="M576.6 51.3Q576.6 48.5 579 48.5Q581.6 48.5 581.6 50.8Q581.6 52.3 579.2 53.5V55" fill="none" stroke="#fff" stroke-width="1.9"/><rect x="578.2" y="56.2" width="2" height="1.9" fill="#fff"/><rect x="593.7" y="45.7" width="14.6" height="11.2" rx="1" fill="#fff" stroke="#0e5a8e" stroke-width="1.3"/><rect x="595" y="47" width="4" height="6.4" fill="#d00000"/><rect x="599" y="47" width="4" height="6.4" fill="#78b82a"/><rect x="603" y="47" width="4" height="6.4" fill="#0079c1"/><rect x="600" y="57" width="2" height="2.3" fill="#0e5a8e"/><rect x="597" y="59" width="8" height="1.8" rx="0.8" fill="#0e5a8e"/><rect x="51" y="118" width="1.2" height="13.5" fill="#a9c4e0"/><rect x="250" y="118" width="1.2" height="13.5" fill="#a9c4e0"/><rect x="383" y="118" width="1.2" height="13.5" fill="#a9c4e0"/><rect x="465" y="118" width="1.2" height="13.5" fill="#a9c4e0"/><path d="M37 117.5H41.5V131.3H29V128" fill="none" stroke="#555" stroke-width="1"/><path d="M38.3 120H40.3M38.3 122H40.3M38.3 124H40.3M38.3 126H40.3" stroke="#7ab32c" stroke-width="0.9"/><circle cx="33.5" cy="123.3" r="5.3" fill="#fff" stroke="#6a6a6a" stroke-width="1.6"/><rect x="30" y="121.3" width="7.2" height="3.8" fill="#7ab32c"/><path d="M37.2 127L40.5 130.5" stroke="#6a6a6a" stroke-width="2.6"/><path d="M64.5 117.8H72L75.5 121.3V131.2H64.5Z" fill="#fff" stroke="#555" stroke-width="1"/><path d="M72 117.8V121.3H75.5Z" fill="#555"/><path d="M62 124Q63 120.5 67 120.5Q69.5 120.5 71 122" fill="none" stroke="#1f4fa0" stroke-width="1.8"/><path d="M60.3 123.2L63.6 126.2L65 122.2Z" fill="#1f4fa0"/><path d="M73 125Q72 128.5 68 128.5Q65.5 128.5 64 127" fill="none" stroke="#1f4fa0" stroke-width="1.8"/><path d="M74.6 125.8L71.4 122.8L70 126.8Z" fill="#1f4fa0"/><rect x="85.7" y="119.6" width="7.6" height="7.6" fill="#fdb813" stroke="#f07d00" stroke-width="1"/><rect x="90.5" y="124.2" width="8" height="7.1" fill="#fff" stroke="#555" stroke-width="1"/><path d="M93.8 119Q95 116.6 97 117.4Q98.6 118.3 97.6 121" fill="none" stroke="#444" stroke-width="1"/><path d="M95.8 120.6L97.6 123.2L99.3 120.6Z" fill="#444"/><path d="M109.3 131.3V121.5H113.5L114.5 123H121.5V125" fill="#fbc02d" stroke="#d84315" stroke-width="1"/><path d="M109.3 131.3L112 125H124.3L121.5 131.3Z" fill="#fcc93a" stroke="#d84315" stroke-width="1"/><path d="M116 119.5Q119 116.5 122.5 118.5" fill="none" stroke="#444" stroke-width="1"/><path d="M121.5 116.8L124.3 118.8L121.5 120.5Z" fill="#444"/><rect x="225.5" y="117.5" width="8" height="12" fill="#a9c8e6" stroke="#1a6aa0" stroke-width="1.2"/><path d="M227 119.5H231M227 121.5H231" stroke="#fff" stroke-width="0.9"/><path d="M231.5 119H238L240.5 121.5V131.3H231.5Z" fill="#fff" stroke="#555" stroke-width="1"/><path d="M229.3 124.2H233.5V122L237.8 125.5L233.5 129V126.8H229.3Z" fill="#6ab42c" stroke="#3b8a24" stroke-width="0.6"/><rect x="264.5" y="117.6" width="9.6" height="13.3" fill="#fde38a" stroke="#e8690f" stroke-width="1.6"/><path d="M259.5 117.5H262.5V122.5H265.5A3.2 3.2 0 1 1 265.5 127H262.5V131H259.5Z" fill="#9bbfe0" stroke="#0e5a8e" stroke-width="1.2"/><path d="M284.5 126Q284 122.5 287.2 123Q290.5 123.7 290 127.3Q289.5 130.5 286.5 129.8Q284.7 129.4 284.5 126Z" fill="#fff" stroke="#111" stroke-width="1.1"/><path d="M291 128Q291 125 294 125.5Q296.6 126 296.3 129Q296 131.5 293.3 131Q291 130.5 291 128Z" fill="#fff" stroke="#111" stroke-width="1.1"/><path d="M286.7 122.7Q287.5 119 290.5 119.3M290 127Q290.5 126.2 291.3 127.2M296.2 127.6L299.5 123.5Q300 122.6 299 122" fill="none" stroke="#111" stroke-width="1.1"/><rect x="397.6" y="117.6" width="4.7999999999999545" height="2.5" rx="1" fill="#8dc63f" stroke="#2e7d32" stroke-width="1.1"/><rect x="395.6" y="122.7" width="8.799999999999955" height="2.5" rx="1" fill="#c8d8ea" stroke="#0d5c91" stroke-width="1.1"/><rect x="393.5" y="127.6" width="12.899999999999977" height="2.8000000000000114" rx="1" fill="#8dc63f" stroke="#2e7d32" stroke-width="1.1"/><rect x="417.5" y="117.6" width="12.800000000000011" height="2.8000000000000114" rx="1" fill="#8dc63f" stroke="#2e7d32" stroke-width="1.1"/><rect x="419.7" y="122.7" width="8.699999999999989" height="2.5" rx="1" fill="#c8d8ea" stroke="#0d5c91" stroke-width="1.1"/><rect x="421.6" y="127.6" width="4.7999999999999545" height="2.8000000000000114" rx="1" fill="#8dc63f" stroke="#2e7d32" stroke-width="1.1"/><path d="M441.5 117.5H454.5V120.5L449.5 124.5V130.8H446V124.5L441.5 120.5Z" fill="#a4c2e2" stroke="#0d5c91" stroke-width="1.2"/><circle cx="451.8" cy="125" r="2.5" fill="#cfdce7" stroke="#0d5c91" stroke-width="1"/><rect x="474.6" y="118.4" width="15" height="12" fill="#5c5c5c"/><rect x="475.6" y="119.4" width="4" height="3" fill="#fcd94c"/><rect x="480.40000000000003" y="119.4" width="4" height="3" fill="#9dc3e6"/><rect x="485.20000000000005" y="119.4" width="4" height="3" fill="#8fcc5a"/><rect x="475.6" y="123.2" width="4" height="3" fill="#f7a01a"/><rect x="480.40000000000003" y="123.2" width="4" height="3" fill="#d9b8a6"/><rect x="485.20000000000005" y="123.2" width="4" height="3" fill="#ffc800"/><rect x="475.6" y="127.0" width="4" height="3" fill="#f6c4c8"/><rect x="480.40000000000003" y="127.0" width="4" height="3" fill="#a8d58c"/><rect x="485.20000000000005" y="127.0" width="4" height="3" fill="#8fb8e0"/><path d="M502 121V118.6H514.2M502 128.5V130.8H514.2M507.5 118.6V130.8M512.5 118.6V130.8M502 122.6H514.2M502 126.7H514.2" fill="none" stroke="#5c5c5c" stroke-width="1.1"/><rect x="504.5" y="118.9" width="7.4" height="11.6" fill="#fff" opacity="0.9"/><path d="M502 121V118.6H514.2M502 128.5V130.8H514.2M507.5 118.6V130.8M512.5 118.6V130.8M502 122.6H514.2M502 126.7H514.2" fill="none" stroke="#5c5c5c" stroke-width="1.1"/><rect x="498.3" y="122.3" width="5.5" height="4.6" fill="#fcd94c" stroke="#e8690f" stroke-width="1.3"/><path d="M526 120V117.6H538M526 126.5V129.5H530M532 117.6V124M537.5 117.6V124M526 121.6H538" fill="none" stroke="#5c5c5c" stroke-width="1.1"/><rect x="522.5" y="121.2" width="5.5" height="4.6" fill="#fcd94c" stroke="#e8690f" stroke-width="1.3"/><rect x="530.6" y="124.5" width="7.4" height="7.4" fill="#0a5e91"/><rect x="532.3" y="125.3" width="3.8" height="2" fill="#fff"/><rect x="532.3" y="129.5" width="3.8" height="1.4" fill="#fff"/><path d="M663 704H702L683 723H663Z" fill="url(#sapg)"/><text x="664.5" y="718.2" font-family="Liberation Sans" font-weight="bold" font-size="14" fill="#fff" stroke="#fff" stroke-width="0.9" letter-spacing="-1.2" transform="translate(664.5 718.2) scale(1 1.1) translate(-664.5 -718.2)">SAP</text><path d="M1350 707.5V718L1343.8 712.8Z" fill="#fff" stroke="#4f7fb0" stroke-width="1.5" stroke-linejoin="round"/></svg>
<div class="a" style="left:0px;top:728px;width:1366px;height:40px;background:#24242f"></div>
<div class="a" style="left:0px;top:728px;width:47px;height:40px;background:#32343f"></div>
<div class="a" style="left:47px;top:728px;width:1px;height:40px;background:#282a35"></div>
<div class="a" style="left:48px;top:728px;width:288px;height:40px;background:#f1f1f1"></div>
<div class="t" style="left:88.30px;top:742px;font-size:14.5px;letter-spacing:-0.061px;color:#2b2b2b;">Type here to search</div>
<div class="a" style="left:681px;top:728px;width:44px;height:40px;background:#4a4a56"></div>
<div class="a" style="left:725px;top:728px;width:4px;height:40px;background:#3a3a46"></div>
<div class="a" style="left:489px;top:766px;width:40px;height:2px;background:#76b9ed"></div>
<div class="a" style="left:538px;top:766px;width:40px;height:2px;background:#76b9ed"></div>
<div class="a" style="left:636px;top:766px;width:40px;height:2px;background:#76b9ed"></div>
<div class="a" style="left:681px;top:766px;width:48px;height:2px;background:#76b9ed"></div>
<div class="a" style="left:1361px;top:728px;width:1px;height:40px;background:#6b6b78"></div>
<div class="t" style="left:1218.60px;top:733.6px;font-size:11.5px;letter-spacing:-1.388px;color:#fff;">ENG</div>
<div class="t" style="left:1223.80px;top:750.6px;font-size:11.5px;letter-spacing:0.705px;color:#fff;">IN</div>
<div class="t" style="left:1258.90px;top:733.6px;font-size:11.5px;letter-spacing:-0.058px;color:#fff;">4:03 PM</div>
<div class="t" style="left:1254.00px;top:750.6px;font-size:11.5px;letter-spacing:0.295px;color:#fff;">25-Apr-25</div>
<svg style="left:0;top:0" width="1366" height="768"><defs><linearGradient id="edg1" x1="0" y1="0" x2="1" y2="0.6"><stop offset="0" stop-color="#2bb8f0"/><stop offset="0.5" stop-color="#33c6bf"/><stop offset="1" stop-color="#6ee25a"/></linearGradient><linearGradient id="edg2" x1="0" y1="0" x2="0" y2="1"><stop offset="0" stop-color="#1a8fe0"/><stop offset="1" stop-color="#0c59a4"/></linearGradient><linearGradient id="olk" x1="0" y1="0" x2="0" y2="1"><stop offset="0" stop-color="#1da1e8"/><stop offset="1" stop-color="#28d2f5"/></linearGradient></defs><path d="M15.7 742.2L21.9 741.4V747H15.7Z M22.9 741.2L32.1 739.8V747H22.9Z M15.7 748H21.9V753.6L15.7 752.8Z M22.9 748H32.1V756.2L22.9 754.8Z" fill="#fff"/><circle cx="70.4" cy="745.3" r="5.2" fill="none" stroke="#111" stroke-width="1.2"/><path d="M66.7 749L60.3 755.5" stroke="#111" stroke-width="1.3"/><path d="M352.8 742V740.2H363.2V742M352.8 754.6V752.8H363.2V754.6" fill="none" stroke="#fff" stroke-width="1"/><rect x="352.8" y="743.2" width="10.4" height="8.2" fill="none" stroke="#fff" stroke-width="1.1"/><path d="M366.6 740V755" stroke="#fff" stroke-width="1"/><rect x="365.3" y="744.5" width="2.6" height="2.6" fill="#fff"/><circle cx="411.2" cy="748" r="12.1" fill="#1282dc"/><path d="M404.5 758.8Q400.8 752 404 747.5Q407 744.5 411 745.5Q406.5 747 406.8 752Q407.5 757 413 758.5Q419 759.5 422 754.5Q420 759.8 412.5 760.2Q407.5 760.3 404.5 758.8Z" fill="#0b5cb0"/><path d="M407 752Q406.8 747.5 410.5 746Q413.5 745.5 413.3 749Q413 751.5 416.5 752.8Q420 753.8 422.3 752.5Q420.5 758.5 413 758.5Q407.5 757.5 407 752Z" fill="#0e56a8"/><path d="M399.2 746.5Q400.5 736 411.2 735.9Q421.5 736 423.3 747Q423.6 752 419.5 752.7Q415 753.3 413 750.8Q414.8 748 412.7 746Q409 742.8 403.5 744.3Q400.8 745.2 399.2 746.5Z" fill="url(#edg1)"/><ellipse cx="410.6" cy="749" rx="2.4" ry="3" fill="#24242f"/><path d="M412.6 751.3Q416 754.3 422 753.4" fill="none" stroke="#24242f" stroke-width="1.2"/><path d="M448.8 741.2Q448.8 740 450 740H455.5L457 741.8H470.4V756.8H448.8Z" fill="#f9c94e"/><rect x="448.8" y="739" width="8" height="2.6" fill="#e3a21a"/><rect x="448.8" y="743.2" width="21.6" height="13.6" fill="#fdd56d"/><path d="M453.2 757V749H466V757H462.5V752H456.7V757Z" fill="#3d96e6"/><circle cx="509" cy="748" r="12" fill="#2fa24f"/><path d="M509 736A12 12 0 0 1 519.4 742H509Z" fill="#e33b2e"/><path d="M498.6 742A12 12 0 0 1 509 736V742H498.6Z M509 736 L519.4 742 L509 742" fill="#e33b2e"/><path d="M498.6 742L504 751L509 742Z" fill="#e33b2e"/><path d="M519.4 742A12 12 0 0 1 509 760L514.2 751L509 742Z" fill="#fbc52c"/><path d="M509 742 L498.6 742 A12 12 0 0 0 509 760 L514.2 751Z" fill="#2fa24f"/><path d="M509 742L498.6 742A12 12 0 0 1 509 736A12 12 0 0 1 519.4 742Z" fill="#e33b2e"/><circle cx="509" cy="748" r="6" fill="#fff"/><circle cx="509" cy="748" r="4.9" fill="#3b7ee8"/><path d="M547.2 759.4L548.9 754.4A11 11 0 1 1 552.8 757.7Z" fill="none" stroke="#28d366" stroke-width="2"/><path d="M553.5 742.7Q554.7 741.8 555.3 742.8L556.4 745Q556.7 745.8 555.8 746.5Q555.3 747 556.2 748.5Q557.8 750.7 559.8 751.5Q560.5 751.8 561 751.2L561.8 750.4Q562.5 749.8 563.3 750.3L565 751.4Q565.8 752 565.2 753Q563.5 755.2 560.5 754Q556.5 752.5 554 748.5Q552 745 553.5 742.7Z" fill="#28d366"/><path d="M598.2 741.5L607 736.6L618.8 741.5V756.8Q618.8 758.8 616.8 758.8H600.2Q598.2 758.8 598.2 756.8Z" fill="url(#olk)"/><path d="M606 745.5L618.8 741.5V746.8L609 752Z" fill="#0a5fb5"/><rect x="594.9" y="740.8" width="12.8" height="12.5" rx="0.8" fill="#1470d0"/><ellipse cx="601.3" cy="747" rx="3.3" ry="3.8" fill="none" stroke="#fff" stroke-width="1.6"/><rect x="656.5" y="740" width="10.5" height="15.6" fill="#fff" stroke="#1f7a40" stroke-width="0.8"/><path d="M657 742.8H666.6M657 745.4H666.6M657 748H666.6M657 750.6H666.6M657 753.2H666.6M661.5 740.5V755.2" stroke="#2f8a4f" stroke-width="0.7"/><path d="M658 736.8V760.2L644.4 757.8V739.2Z" fill="#1e7a3f"/><path d="M647.6 743.3H650.2L651.6 746.5L653 743.3H655.5L652.9 748.2L655.7 753.2H653L651.6 750L650 753.2H647.4L650.2 748.2Z" fill="#fff"/><path d="M693.3 742.2H715.8L704.6 753.8H693.3Z" fill="#2b8fdc" stroke="#c9973a" stroke-width="0.8"/><path d="M695.2 745.4H711.2L707.4 749.6H695.2Z" fill="#f2ae1c"/><path d="M1098.2 751L1104 744.4L1109.8 751" fill="none" stroke="#fff" stroke-width="1.1"/><rect x="1123.5" y="745.3" width="8" height="7.2" rx="1" fill="none" stroke="#fff" stroke-width="1.1"/><path d="M1131.6 747.5L1134 746V751.6L1131.6 750.2" fill="none" stroke="#fff" stroke-width="1.1"/><path d="M1124.5 742.6Q1128.2 739.6 1132 742.6M1124.5 755.3Q1128.2 758.2 1132 755.3" fill="none" stroke="#fff" stroke-width="1"/><path d="M1145 743V745.2M1147.5 743V745.2M1144.2 745.2H1148.3V747.5Q1148.3 749 1146.3 749Q1144.2 749 1144.2 747.5Z M1146.3 749V752.8" fill="none" stroke="#fff" stroke-width="1"/><rect x="1148.7" y="744.6" width="10.3" height="7.8" fill="none" stroke="#fff" stroke-width="1.1"/><rect x="1150.3" y="746.1" width="7.2" height="4.9" fill="#fff"/><rect x="1159.1" y="746.6" width="1.2" height="3.8" fill="#fff"/><path d="M1176.97 754.5A4.5 4.5 0 0 1 1181.4 750.0" fill="none" stroke="#fff" stroke-width="1.1"/><path d="M1173.68 754.5A8 8 0 0 1 1181.4 746.5" fill="none" stroke="#fff" stroke-width="1.1"/><path d="M1170.39 754.5A11.5 11.5 0 0 1 1181.4 743.0" fill="none" stroke="#fff" stroke-width="1.1"/><circle cx="1181.3" cy="753.6" r="1.3" fill="#fff"/><path d="M1192.3 745.5H1195.5L1200 741.6V754.6L1195.5 750.7H1192.3Z" fill="none" stroke="#fff" stroke-width="1.1"/><path d="M1201.8 745.2Q1203.4 748.1 1201.8 751M1203.8 743.3Q1206.6 748.1 1203.8 752.9" fill="none" stroke="#fff" stroke-width="1.1"/><path d="M1206 741.3Q1209.8 748.1 1206 754.9" fill="none" stroke="#888" stroke-width="1"/><path d="M1325 739.8H1341V751.2H1331.5L1328.5 754V751.2H1325Z" fill="#fff"/><path d="M1327.5 742.9H1338.6M1327.5 745.5H1338.6M1327.5 748.1H1335" stroke="#24242f" stroke-width="0.9"/><circle cx="1340.5" cy="755.3" r="7.8" fill="#2e2e3a" stroke="#9b9ba3" stroke-width="1"/><text x="1337.3" y="759.6" font-family="Liberation Sans" font-size="11" font-weight="bold" fill="#fff">1</text></svg>
</body></html>
